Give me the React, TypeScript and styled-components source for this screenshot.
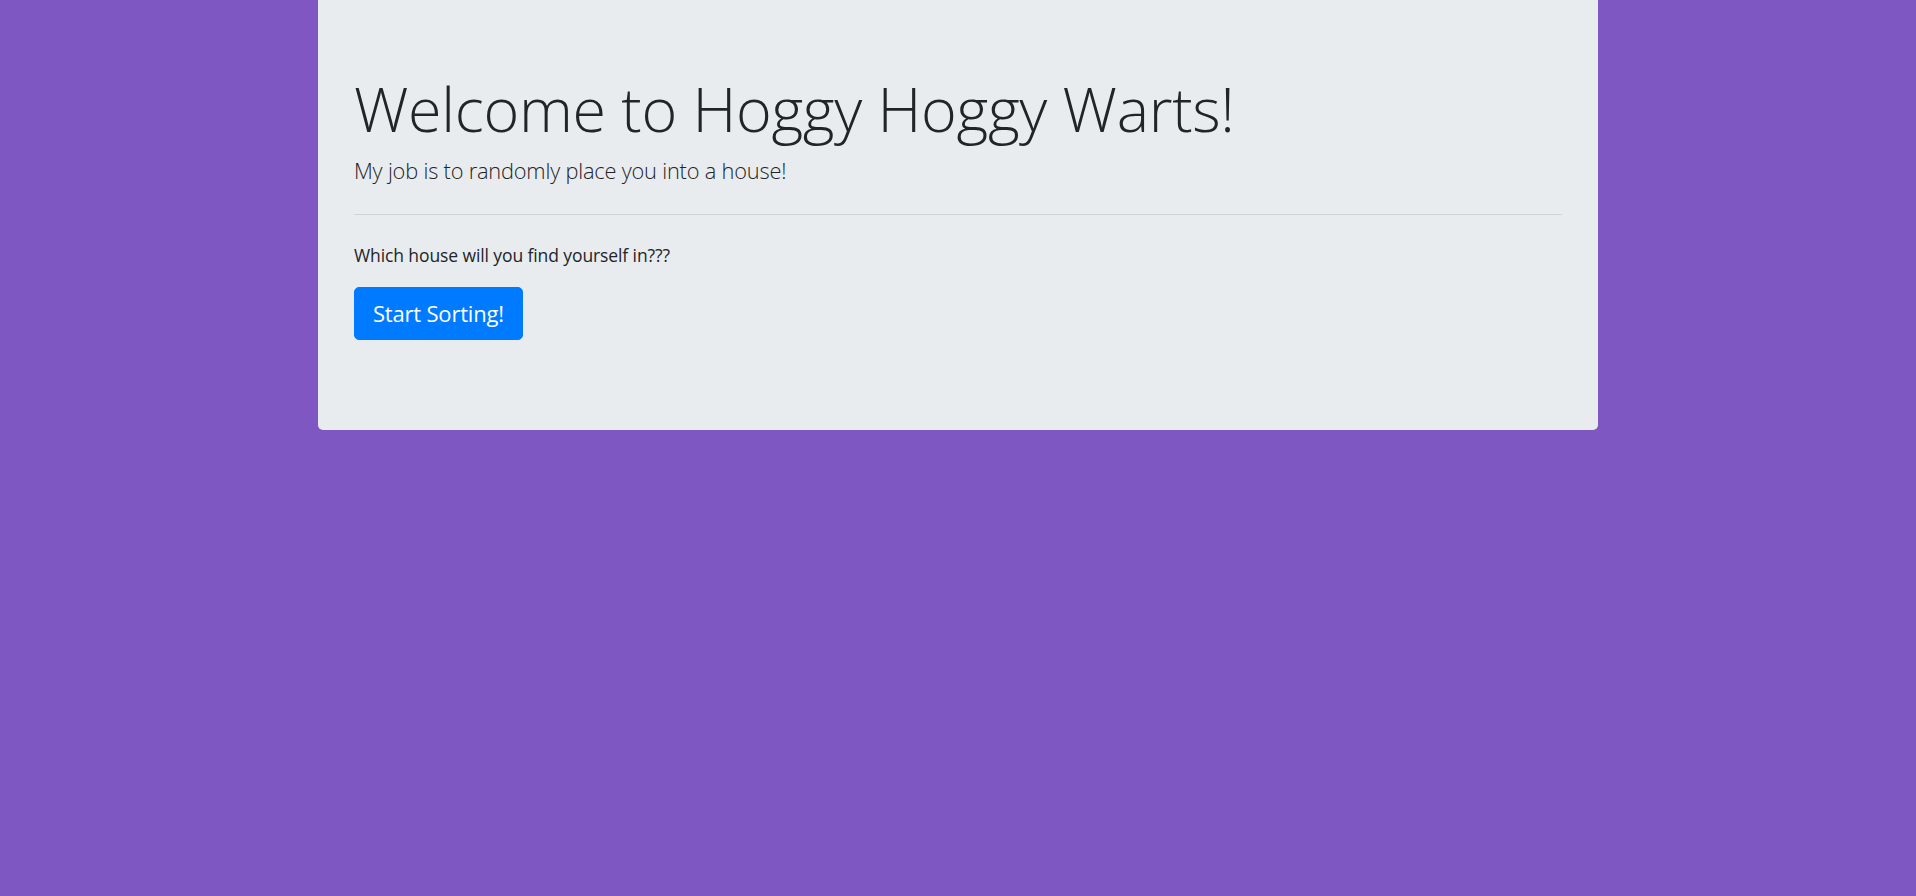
import React from "react";
import styled, { createGlobalStyle } from "styled-components";

const Global = createGlobalStyle`
  html, body { margin: 0; padding: 0; }
  body {
    background: #7e57c2;
    font-family: "Open Sans", "Noto Sans", sans-serif;
    color: #212529;
    font-size: 18px;
    line-height: 27px;
  }
`;

const Page = styled.div`
  min-height: 896px;
`;

const Jumbotron = styled.section`
  box-sizing: border-box;
  width: 1280px;
  margin: 0 auto;
  padding: 71px 36px 72px;
  background: #e9ecef;
  border-radius: 0 0 5px 5px;
`;

const Title = styled.h1`
  margin: 0 0 7px;
  font-size: 61px;
  font-weight: 300;
  line-height: 75.6px;
  letter-spacing: -0.3px;
`;

const Lead = styled.p`
  margin: 0;
  font-size: 21.8px;
  font-weight: 300;
  line-height: 33.75px;
  letter-spacing: -0.2px;
`;

const Rule = styled.hr`
  margin: 27px 0;
  border: 0;
  border-top: 1px solid rgba(0, 0, 0, 0.1);
`;

const Text = styled.p`
  margin: 0 0 18px;
  font-size: 17.5px;
  line-height: 27px;
  letter-spacing: -0.1px;
`;

const ButtonRow = styled.p`
  margin: 0 0 18px;
  line-height: 0;
`;

const Button = styled.a`
  display: inline-block;
  box-sizing: border-box;
  height: 53px;
  padding: 0 18px;
  line-height: 51px;
  font-size: 22px;
  color: #fff;
  background: #007bff;
  border: 1px solid #007bff;
  border-radius: 5px;
  text-decoration: none;
  cursor: pointer;
  letter-spacing: -0.2px;
`;

export default function App() {
  return (
    <Page>
      <Global />
      <Jumbotron>
        <Title>Welcome to Hoggy Hoggy Warts!</Title>
        <Lead>My job is to randomly place you into a house!</Lead>
        <Rule />
        <Text>Which house will you find yourself in???</Text>
        <ButtonRow>
          <Button role="button">Start Sorting!</Button>
        </ButtonRow>
      </Jumbotron>
    </Page>
  );
}
